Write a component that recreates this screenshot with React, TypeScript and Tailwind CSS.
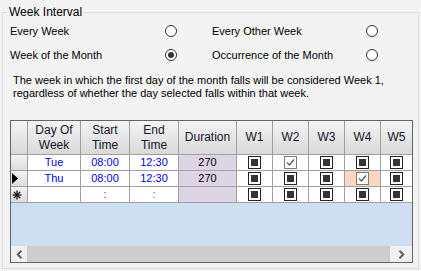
import React from "react";

type Cell = { kind: "ind" } | { kind: "chk"; bg?: string };

const ind: Cell = { kind: "ind" };

const rows = [
  {
    marker: "none",
    day: "Tue",
    start: "08:00",
    end: "12:30",
    duration: "270",
    weeks: [ind, { kind: "chk" } as Cell, ind, ind, ind],
  },
  {
    marker: "current",
    day: "Thu",
    start: "08:00",
    end: "12:30",
    duration: "270",
    weeks: [ind, ind, ind, { kind: "chk", bg: "bg-[#fdd6c2]" } as Cell, ind],
  },
  {
    marker: "new",
    day: "",
    start: ":",
    end: ":",
    duration: "",
    weeks: [ind, ind, ind, ind, ind],
  },
];

function Radio({ checked }: { checked?: boolean }) {
  return (
    <span className="w-[12px] h-[12px] rounded-full border border-[#333] bg-white flex items-center justify-center">
      {checked && <span className="w-[6px] h-[6px] rounded-full bg-[#333]" />}
    </span>
  );
}

function CheckBox({ cell }: { cell: Cell }) {
  if (cell.kind === "ind") {
    return (
      <span className="w-[13px] h-[13px] border border-[#222] bg-white p-[2px] flex">
        <span className="w-full h-full bg-[#333]" />
      </span>
    );
  }
  return (
    <span className="w-[13px] h-[13px] border border-[#7a7a7a] bg-white flex items-center justify-center">
      <svg width="11" height="11" viewBox="0 0 11 11">
        <path d="M2 5.5 L4.5 8 L9 2.5" fill="none" stroke="#555" strokeWidth="1.2" />
      </svg>
    </span>
  );
}

function RowMarker({ marker }: { marker: string }) {
  if (marker === "current") {
    return (
      <svg width="8" height="11" viewBox="0 0 8 11" className="ml-[1px]">
        <polygon points="0,0 6,5.5 0,11" fill="#000" />
      </svg>
    );
  }
  if (marker === "new") {
    return (
      <svg width="10" height="10" viewBox="0 0 10 10" className="ml-[1px]">
        <g stroke="#000" strokeWidth="1.2">
          <line x1="5" y1="0.5" x2="5" y2="9.5" />
          <line x1="0.5" y1="5" x2="9.5" y2="5" />
          <line x1="1.8" y1="1.8" x2="8.2" y2="8.2" />
          <line x1="8.2" y1="1.8" x2="1.8" y2="8.2" />
        </g>
      </svg>
    );
  }
  return null;
}

const header = "bg-gradient-to-b from-[#f4f4f4] to-[#d9d9d9] border-r border-b border-[#a0a0a0] flex items-center justify-center text-center text-[12px] leading-[15px] text-[#141428]";
const cell = "bg-white border-r border-b border-[#a0a0a0] h-[16px] flex items-center justify-center text-[11px]";

export default function App() {
  return (
    <div className="w-[421px] h-[271px] bg-[#f3f3f3] pt-[5px] px-[2px] font-['Liberation_Sans',Arial,sans-serif] text-black overflow-hidden">
      <fieldset className="border border-[#dcdcdc] h-[264px] m-0 p-0 min-w-0">
        <legend className="ml-[4px] px-[2px] text-[12px] leading-[15px]">Week Interval</legend>

        {/* Radio options */}
        <div className="mt-[3px] pl-[7px] flex flex-col gap-[8px] text-[11px]">
          <div className="flex h-[16px] items-center">
            <div className="w-[167px] flex items-center justify-between">
              <span>Every Week</span>
              <Radio />
            </div>
            <div className="ml-[35px] w-[166px] flex items-center justify-between">
              <span>Every Other Week</span>
              <Radio />
            </div>
          </div>
          <div className="flex h-[16px] items-center">
            <div className="w-[167px] flex items-center justify-between">
              <span>Week of the Month</span>
              <Radio checked />
            </div>
            <div className="ml-[35px] w-[166px] flex items-center justify-between">
              <span>Occurrence of the Month</span>
              <Radio />
            </div>
          </div>
        </div>

        <p className="mt-[11px] pl-[10px] text-[11px] leading-[13px]">
          The week in which the first day of the month falls will be considered Week 1,
          <br />
          regardless of whether the day selected falls within that week.
        </p>

        {/* Grid */}
        <div className="mt-[20px] ml-[7px] w-[403px] border border-[#646464] flex flex-col">
          <div className="grid grid-cols-[17px_53px_49px_49px_58px_36px_36px_36px_36px_31px]">
            <div className={header + " h-[34px]"} />
            <div className={header}>Day Of<br />Week</div>
            <div className={header}>Start<br />Time</div>
            <div className={header}>End<br />Time</div>
            <div className={header}>Duration</div>
            <div className={header}>W1</div>
            <div className={header}>W2</div>
            <div className={header}>W3</div>
            <div className={header}>W4</div>
            <div className={header + " border-r-0"}>W5</div>

            {rows.map((r, i) => (
              <React.Fragment key={i}>
                <div className="h-[16px] bg-gradient-to-b from-[#f4f4f4] to-[#dedede] border-r border-b border-[#a0a0a0] flex items-center">
                  <RowMarker marker={r.marker} />
                </div>
                <div className={cell + " text-[#0000ff]"}>{r.day}</div>
                <div className={cell + (r.start === ":" ? " text-[#6b3a8a]" : " text-[#0000ff]")}>{r.start}</div>
                <div className={cell + (r.end === ":" ? " text-[#6b6b3a]" : " text-[#0000ff]")}>{r.end}</div>
                <div className={cell + " !bg-[#ddd4e6]"}>{r.duration}</div>
                {r.weeks.map((w, j) => (
                  <div
                    key={j}
                    className={cell + (j === 4 ? " border-r-0" : "") + (w.kind === "chk" && w.bg ? " !bg-[#fdd6c2]" : "")}
                  >
                    <CheckBox cell={w} />
                  </div>
                ))}
              </React.Fragment>
            ))}
          </div>

          <div className="h-[43px] bg-[#cfdff1]" />

          {/* Horizontal scrollbar */}
          <div className="h-[16px] bg-[#f0f0f0] flex items-stretch">
            <div className="w-[16px] flex items-center justify-center">
              <svg width="7" height="9" viewBox="0 0 7 9">
                <path d="M5.5 0.8 L1.8 4.5 L5.5 8.2" fill="none" stroke="#606060" strokeWidth="2" />
              </svg>
            </div>
            <div className="w-[363px] bg-[#cdcdcd]" />
            <div className="flex-1 flex items-center justify-center">
              <svg width="7" height="9" viewBox="0 0 7 9">
                <path d="M1.5 0.8 L5.2 4.5 L1.5 8.2" fill="none" stroke="#606060" strokeWidth="2" />
              </svg>
            </div>
          </div>
        </div>
      </fieldset>
    </div>
  );
}
